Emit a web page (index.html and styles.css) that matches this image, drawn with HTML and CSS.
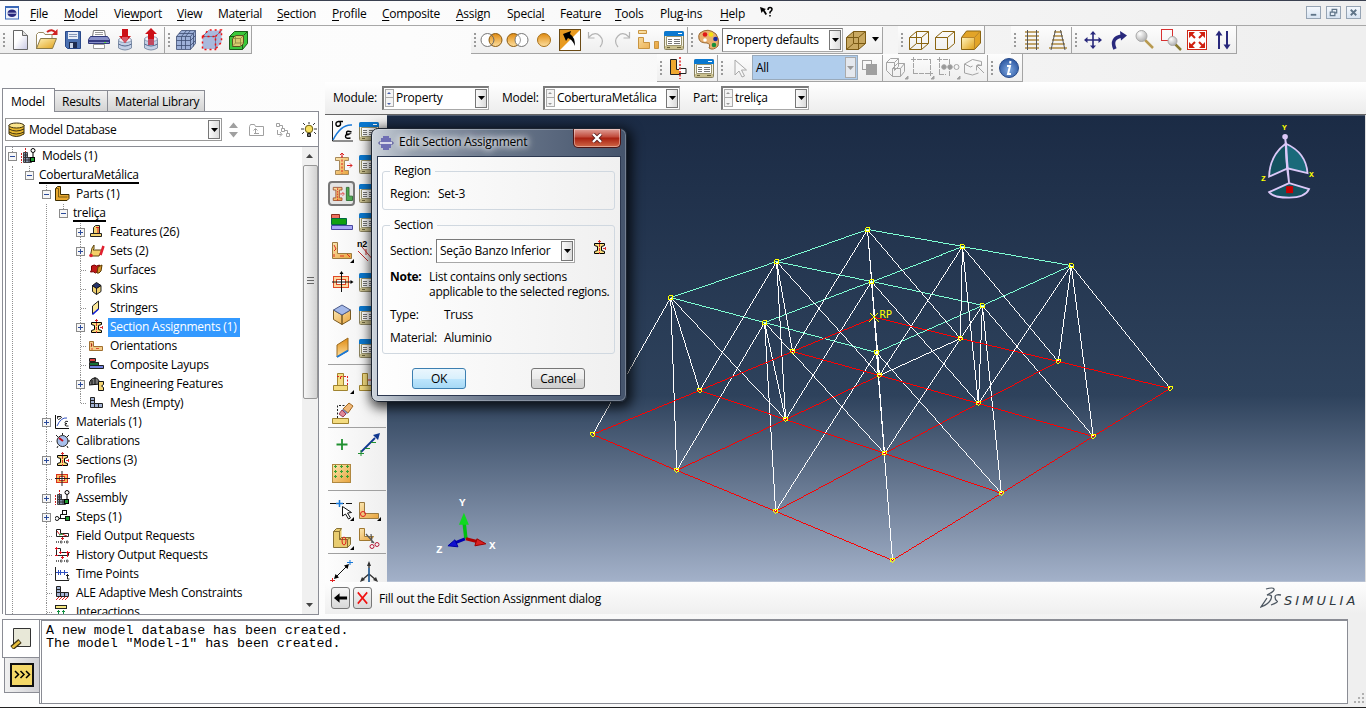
FILE: index.html
```html
<!DOCTYPE html>
<html lang="en">
<head>
<meta charset="utf-8">
<title>Edit Section Assignment</title>
<link rel="stylesheet" href="styles.css">
</head>
<body>
<svg class="defs" width="0" height="0" aria-hidden="true">
  <defs>
    <linearGradient id="gOr" x1="0" y1="0" x2="0" y2="1"><stop offset="0" stop-color="#e08a10"/><stop offset="1" stop-color="#fde0a0"/></linearGradient>
    <linearGradient id="gGold" x1="0" y1="0" x2="1" y2="1"><stop offset="0" stop-color="#fff2b8"/><stop offset="1" stop-color="#e0a21c"/></linearGradient>
    <linearGradient id="gPage" x1="0" y1="0" x2="1" y2="1"><stop offset="0.4" stop-color="#fff"/><stop offset="1" stop-color="#c8c8e4"/></linearGradient>
    <linearGradient id="gBar" x1="0" y1="0" x2="1" y2="1"><stop offset="0" stop-color="#fbe6b0"/><stop offset="1" stop-color="#e8a33c"/></linearGradient>
    <radialGradient id="gBall" cx="0.35" cy="0.3" r="0.8"><stop offset="0" stop-color="#fff"/><stop offset="1" stop-color="#a8a8a8"/></radialGradient>
    <radialGradient id="gInfo" cx="0.5" cy="0.6" r="0.6"><stop offset="0" stop-color="#7fa8e0"/><stop offset="1" stop-color="#2a55a0"/></radialGradient>
  </defs>
  <symbol id="table" viewBox="0 0 24 24"><rect x="2.500" y="3.500" width="19" height="18" rx="1" fill="#f4f2e4" stroke="#8a8360"/><path d="M2 8V5q0-2 2-2h16q2 0 2 2v3z" fill="#0a78d0"/><path d="M16 5.500h4" stroke="#fff"/><path d="M4.500 8.500h15v9h-15z" fill="#fff" stroke="#9a946e"/><path d="M6 11.500h4M6 13.500h4M6 15.500h4M12 11.500h6M12 13.500h6M12 15.500h6" stroke="#777"/><path d="M3 18h18v3H3z" fill="#c9bf8e"/><path d="M5 19.500h3M15 19.500h4" stroke="#6b633c"/></symbol>
  <symbol id="ibeam" viewBox="0 0 16 16"><path d="M2.500 3.500h10v2l-3 1v4l3 1v2h-10v-2l3-1v-4l-3-1z" fill="#fadc7c" stroke="#000"/><path d="M7.500 0v14M6 1.500h3M11 8.500h4M13.500 7v3" stroke="#d83030" stroke-dasharray="3 1"/></symbol>
  <symbol id="bigbeam" viewBox="0 0 24 24"><path d="M5.500 5.500h13v3h-4v10h4v4h-13v-4h4v-10h-4z" fill="url(#gBar)" stroke="#a8895a"/><path d="M12 4v18" stroke="#e02020" stroke-dasharray="2 1.500"/><path d="M12 5V1.500M10 3l2-2 2 2M17 13.500h5M20 11.500l2 2-2 2" fill="none" stroke="#d82020"/></symbol>
  <symbol id="assembly" viewBox="0 0 16 16"><path d="M2.500 4.500h4v5h4v5h-8z" fill="#8794b0" stroke="#444"/><path d="M4.500 5v9M3 7h4M3 9.500h7M3 12h7M8 10v4" stroke="#333"/><path d="M4.500 0v4M.500 5v10" stroke="#d02020" stroke-dasharray="2 1"/><circle cx="12" cy="2.500" r="2" fill="#fff" stroke="#000"/><path d="M12 5v4" stroke="#000"/><rect x="9.500" y="9.500" width="4" height="4" fill="#1c9c30" stroke="#000"/></symbol>
  <symbol id="wirecube" viewBox="0 0 24 24"><path d="M2.500 9.500h12v12h-12zM9.500 3.500h12v12h-12zM2.500 9.500l7-6M14.500 9.500l7-6M2.500 21.500l7-6M14.500 21.500l7-6"/></symbol>
  <symbol id="dn" viewBox="0 0 9 5"><path d="M0 0h9L4.500 5z"/></symbol>
  <symbol id="lplate" viewBox="0 0 24 24"><path d="M2.500 3.500h5v11h14v5h-19z" fill="url(#gBar)" stroke="#9a7a40"/></symbol>
  <symbol id="plus" viewBox="0 0 17 19"><path d="M8.500 0v5M8.500 14v5" stroke="#909090" stroke-dasharray="1 1"/><rect x="4.500" y="5.500" width="8" height="8" fill="#f6f6f6" stroke="#8a8a8a"/><path d="M6 9.500h5M8.500 7v5" stroke="#2a4a9a"/></symbol>
  <symbol id="minus" viewBox="0 0 17 19"><path d="M8.500 0v5" stroke="#909090" stroke-dasharray="1 1"/><rect x="4.500" y="5.500" width="8" height="8" fill="#f6f6f6" stroke="#8a8a8a"/><path d="M6 9.500h5" stroke="#2a4a9a"/></symbol>
  <symbol id="leaf" viewBox="0 0 17 19"><path d="M8.500 0v19M9 9.500h5" stroke="#909090" stroke-dasharray="1 1"/></symbol>
  <symbol id="last" viewBox="0 0 17 19"><path d="M8.500 0v10M9 9.500h5" stroke="#909090" stroke-dasharray="1 1"/></symbol>
</svg>

<header class="menubar">
  <svg class="appicon" viewBox="0 0 14 14"><rect x=".5" y=".5" width="13" height="12.500" fill="#eef3fb" stroke="#3a68b8"/><path d="M1 1.500h12" stroke="#3a68b8"/><ellipse cx="7" cy="7.200" rx="4.500" ry="3.800" fill="#28287c"/><path d="M2 7.200h10" stroke="#c8cce8"/></svg>
  <nav class="menus">
    <span><u>F</u>ile</span><span><u>M</u>odel</span><span>Vie<u>w</u>port</span><span><u>V</u>iew</span><span>Mat<u>e</u>rial</span><span><u>S</u>ection</span><span><u>P</u>rofile</span><span><u>C</u>omposite</span><span><u>A</u>ssign</span><span>Specia<u>l</u></span><span>Feat<u>u</u>re</span><span><u>T</u>ools</span><span>Plu<u>g</u>-ins</span><span><u>H</u>elp</span>
    <svg class="whatis" viewBox="0 0 14 13"><path d="M0 1l6 2-1.500 1 2.500 4-1.500 1L3 5 1.500 7z" fill="#000"/><path d="M8 4q0-2.500 2-2.500t2 2q0 1-2 2.500v1.500M10 9v1.500" stroke="#000" stroke-width="1.500" fill="none"/></svg>
  </nav>
  <div class="winbtns">
    <b><svg viewBox="0 0 14 12"><path d="M4 8.500h6" stroke="#5f7488" stroke-width="2"/></svg></b>
    <b><svg viewBox="0 0 14 12"><path d="M5.500 5V2.500h5v4H9M3.500 5.500h5v4h-5z" fill="none" stroke="#5f7488" stroke-width="1.300"/></svg></b>
    <b><svg viewBox="0 0 14 12"><path d="M4 3l6 6M10 3l-6 6" stroke="#5f7488" stroke-width="2"/></svg></b>
  </div>
</header>

<div class="toolrow">
  <div class="group">
    <i class="grip"></i>
    <svg class="ic" viewBox="0 0 24 24"><path d="M4.500 2.500h9l5 5v14h-14z" fill="url(#gPage)" stroke="#666"/><path d="M13.500 2.500v5h5" fill="#ddd" stroke="#666"/></svg>
    <svg class="ic" viewBox="0 0 24 24"><path d="M1.500 21V6.500l2-2h5l1.500 2h7V12" fill="#fff" stroke="#9a8a60"/><path d="M1.500 20.500l4-10h16l-4 10z" fill="url(#gGold)" stroke="#8a7a48"/><path d="M12 4q5-4 9 1" stroke="#d02020" stroke-width="2" fill="none"/><path d="M22.500 1v6h-6z" fill="#d02020"/></svg>
    <svg class="ic" viewBox="0 0 24 24"><path d="M4.500 3.500h15v17h-13l-2-2z" fill="#4a70b0" stroke="#28488a"/><path d="M7 4h10v7H7z" fill="#e8eef8"/><path d="M8 6.500h8M8 8.500h8" stroke="#8898b8"/><path d="M8 14h8v6H8z" fill="#1d2c50"/><path d="M9 15h3v5H9z" fill="#c8d4e8"/></svg>
    <svg class="ic" viewBox="0 0 24 24"><path d="M6.500 2.500h11l1 6h-13z" fill="#fff" stroke="#777"/><path d="M8 4.500h8M8 6.500h8" stroke="#999"/><path d="M3.500 8.500h17l2 3v4h-21v-4z" fill="#8890c8" stroke="#30387a"/><path d="M2 12h20v2H2z" fill="#343a80"/><path d="M6.500 16.500h11v4h-11z" fill="#fff" stroke="#999"/><path d="M17 14.500h2" stroke="#60e040"/></svg>
    <svg class="ic" viewBox="0 0 24 24"><path d="M5.500 12v8q6.500 4 13 0v-8z" fill="#c4d0e6" stroke="#8090a8"/><ellipse cx="12" cy="12" rx="6.500" ry="2.500" fill="#eef2fa" stroke="#8d9bb5"/><path d="M5.500 16q6.500 4 13 0" fill="none" stroke="#54698e"/><path d="M9 1h6v7h3l-6 7-6-7h3z" fill="#cc1018"/><path d="M9 9h6v2l-3 4-3-4z" fill="#d85868"/></svg>
    <svg class="ic" viewBox="0 0 24 24"><path d="M5.500 11v9q6.500 4 13 0v-9z" fill="#c4d0e6" stroke="#8090a8"/><ellipse cx="12" cy="11" rx="6.500" ry="2.500" fill="#eef2fa" stroke="#8d9bb5"/><path d="M5.500 16q6.500 4 13 0" fill="none" stroke="#54698e"/><path d="M9 17V6H6l6-6 6 6h-3v11z" fill="#cc1018"/><path d="M9 11h6v6H9z" fill="#c04860"/></svg>
    <i class="sep"></i><i class="grip"></i>
    <svg class="ic" viewBox="0 0 24 24"><path d="M2.500 8.500l5-6h14v13l-5 6h-14z" fill="#9db0d8"/><path d="M2.500 8.500l5-6h14v13l-5 6h-14zM2.500 8.500h14v13M16.500 8.500l5-6M7.500 9v12M11.500 9v12M2.500 12.500h14M2.500 17.500h14M7.500 8.500l5-6M11.500 8.500l5-6M5 5.500h14.500v13M16.500 12.500l5-5M16.500 17.500l5-5" fill="none" stroke="#3c4c72" stroke-width=".8"/></svg>
    <svg class="ic" viewBox="0 0 24 24"><path d="M2.500 8.500l6-6h13v12l-6 6.500h-13z" fill="#a9b9dc"/><path d="M2.500 8.500h13v13M15.500 8.500l6-6M2.500 8.500l6-6" fill="none" stroke="#6b7ca4"/><path d="M2.500 8.500h13v13h-13zM2.500 8.500l6-6.500h13v12l-6 7M15.500 8.500l6-6" fill="none" stroke="#f01010" stroke-width="1.500" stroke-dasharray="2 3"/></svg>
    <svg class="ic" viewBox="0 0 24 24"><path d="M3.500 8.500l5-5h13v12l-5 6h-13z" fill="#3bc83b" stroke="#1a5c1a"/><path d="M16.500 8.500l5-5M3.500 8.500h13v13" fill="none" stroke="#1a5c1a"/><path d="M6.500 10.500l3-3h8v8l-3 3h-8z" fill="#d8cc70" stroke="#5c5420"/><path d="M6.500 10.500h8v8M14.500 10.500l3-3M9.500 8v7h8M9.500 15l-3 3" fill="none" stroke="#8c8440" stroke-width=".8"/></svg>
  </div>
  <div class="group g2">
    <i class="grip"></i>
    <svg class="ic" viewBox="0 0 24 24"><circle cx="7.500" cy="12" r="6.500" fill="#fff" stroke="#777"/><circle cx="15.500" cy="12" r="6.500" fill="url(#gOr)" stroke="#8a5a10"/><path d="M11.500 7q5 5 0 10" fill="none" stroke="#666"/></svg>
    <svg class="ic" viewBox="0 0 24 24"><circle cx="7.500" cy="12" r="6.500" fill="url(#gOr)" stroke="#8a5a10"/><circle cx="15.500" cy="12" r="6.500" fill="#fff" stroke="#777"/><path d="M12 7q5 5 0 10" fill="none" stroke="#999"/></svg>
    <svg class="ic" viewBox="0 0 24 24"><circle cx="12" cy="12" r="6.500" fill="url(#gOr)" stroke="#a87018"/></svg>
    <svg class="ic" viewBox="0 0 24 24"><rect x="1.500" y="1.500" width="21" height="21" fill="#fff" stroke="#6b4a14"/><path d="M2 2h20L2 22z" fill="#e89a20"/><path d="M5 6l8-3-1 3q5 3 5 12-3-7-7-8l-2 3z" fill="#000"/></svg>
    <svg class="ic" viewBox="0 0 24 24"><path d="M5 9q6-6 11-1t0 11M4.500 4v6h6" fill="none" stroke="#b4b4b4" stroke-width="1.200"/></svg>
    <svg class="ic" viewBox="0 0 24 24"><path d="M19 9q-6-6-11-1t0 11M19.500 4v6h-6" fill="none" stroke="#b4b4b4" stroke-width="1.200"/></svg>
    <svg class="ic" viewBox="0 0 24 24"><path d="M2.500 2.500h8v3h-8zM2.500 9.500h5v5h6v6h-11zM18.500 13.500h4v7h-4z" fill="url(#gBar)" stroke="#c89440"/></svg>
    <svg class="ic"><use href="#table"/></svg>
    <i class="sep"></i><i class="grip"></i>
    <svg class="ic" viewBox="0 0 24 24"><path d="M3 5q8-6 16 1 4 5 2 12-5 5-9 2 2-4-2-5-7 0-8-4t1-6z" fill="#e8b070" stroke="#9a6830"/><circle cx="8" cy="6.500" r="2.300" fill="#e01818"/><circle cx="14" cy="6.500" r="2.300" fill="#f4e010"/><circle cx="18.500" cy="11" r="2.300" fill="#1828a0"/><circle cx="17" cy="17" r="2.300" fill="#18903a"/><circle cx="8" cy="12" r="1.800" fill="#fff"/></svg>
    <div class="combo w121"><span>Property defaults</span><b><svg><use href="#dn"/></svg></b></div>
    <svg class="ic" viewBox="0 0 24 24"><path d="M2.500 9.500l7-6h12v12l-7 6h-12z" fill="#c8a860"/><use href="#wirecube" fill="none" stroke="#7a5a14"/></svg>
    <svg class="caret" viewBox="0 0 9 5"><path d="M1 0h7L4.500 4.500z"/></svg>
    <i class="sep"></i>
  </div>
  <div class="group g3">
    <i class="grip"></i>
    <svg class="ic"><use href="#wirecube" fill="none" stroke="#8a6410"/></svg>
    <svg class="ic" viewBox="0 0 24 24"><path d="M2.500 9.500h12v12h-12zM2.500 9.500l7-6h12v12l-7 6M14.500 9.500l7-6" fill="none" stroke="#8a6410"/></svg>
    <svg class="ic" viewBox="0 0 24 24"><path d="M2.500 9.500l5-6.500h14v12l-6 6.500h-13z" fill="#e2a428" stroke="#8a6410"/><path d="M3 10h12v11H3z" fill="url(#gGold)"/><path d="M15.500 9.500l5.500-6M3 9.500h12.500v12" stroke="#b8862c" fill="none"/></svg>
  </div>
  <div class="group g4">
    <i class="grip"></i>
    <svg class="ic" viewBox="0 0 24 24"><path d="M5 4h14M5 8h14M5 12h14M5 16h14M5 20h14" stroke="#b08a40" stroke-width="1.600"/><path d="M7.500 2v20M16.500 2v20" stroke="#555"/></svg>
    <svg class="ic" viewBox="0 0 24 24"><path d="M8 4h8M7 8h10M6 12h12M5 16h14M3 20h18" stroke="#b08a40" stroke-width="1.600"/><path d="M9.500 2L5 22M14.500 2L19 22" stroke="#555"/></svg>
    <i class="sep"></i><i class="grip"></i>
    <svg class="ic" viewBox="0 0 24 24"><path d="M12 4v16M4 12h16" stroke="#28287c" stroke-width="1.600"/><path d="M12 3l3 3.500H9zM12 21l3-3.500H9zM3 12l3.500-3v6zM21 12l-3.500-3v6z" fill="#28287c"/></svg>
    <svg class="ic" viewBox="0 0 24 24"><path d="M8 21q-5-11 7-13" fill="none" stroke="#28287c" stroke-width="3.500"/><path d="M13 3l7 4.500-6 5z" fill="#28287c"/></svg>
    <svg class="ic" viewBox="0 0 24 24"><path d="M11 11l9 9" stroke="#b89a50" stroke-width="2.500"/><circle cx="8.500" cy="8" r="5.500" fill="url(#gBall)" stroke="#aaa"/></svg>
    <svg class="ic" viewBox="0 0 24 24"><rect x="2.500" y="1.500" width="11" height="11" fill="none" stroke="#d83030"/><path d="M15 15l7 7" stroke="#8a7a30" stroke-width="2.500"/><circle cx="13.500" cy="13" r="4.500" fill="url(#gBall)" stroke="#aaa"/></svg>
    <svg class="ic" viewBox="0 0 24 24"><rect x="2.500" y="2.500" width="19" height="19" fill="#fff" stroke="#d02818"/><path d="M4 4h6L4 10zM20 4v6l-6-6zM4 20v-6l6 6zM20 20h-6l6-6z" fill="#d02010"/><path d="M6 6l4 4M18 6l-4 4M6 18l4-4M18 18l-4-4" stroke="#d02010" stroke-width="2"/></svg>
    <svg class="ic" viewBox="0 0 24 24"><path d="M8 5v16M16 3v15" stroke="#28287c" stroke-width="2"/><path d="M8 2.500l3.500 5h-7zM16 21.500l3.500-5h-7z" fill="#28287c"/></svg>
  </div>
</div>
<div class="toolrow second">
  <div class="group g5">
    <i class="grip"></i>
    <svg class="ic" viewBox="0 0 24 24"><path d="M4.500 3.500h6v10h4v5h-10z" fill="#efa830" stroke="#222"/><path d="M13 12.500h7v5h-7" fill="#fff" stroke="#222"/><path d="M14 1v22" stroke="#e02020" stroke-width="1.500" stroke-dasharray="2 1.500"/></svg>
    <svg class="ic"><use href="#table"/></svg>
    <i class="sep"></i><i class="grip"></i>
    <svg class="ic cur" viewBox="0 0 24 24"><path d="M7.500 4v15l4-4 3 6 2.500-1-3-6h5z" fill="#f8f8f8" stroke="#a8a8a8"/></svg>
    <div class="combo all"><span>All</span><b><svg><use href="#dn"/></svg></b></div>
    <svg class="ic w24" viewBox="0 0 24 24"><rect x="4.500" y="4.500" width="9" height="9" fill="none" stroke="#a0a0a0"/><rect x="8" y="8" width="11" height="11" fill="#a0a0a0"/></svg>
    <i class="sep"></i>
    <svg class="ic" viewBox="0 0 24 24" fill="none" stroke="#a4a4a4"><path d="M2.500 6.500l4-4h8v8l-4 4M2.500 6.500h8v8M10.500 6.500l4-4M8.500 12.500l5-5h7v8l-4 5h-8zM8.500 12.500h8v8M16.500 12.500l4-5M2.500 6.500v8l6 6"/><path d="M24 23v-3l-3 3z" fill="#999"/></svg>
    <svg class="ic" viewBox="0 0 24 24" fill="none" stroke="#a4a4a4"><path d="M3.500 1v17M1 3.500h20M20.500 3v17M3 17.500h20" stroke-dasharray="5 1"/><path d="M24 23v-3l-3 3z" fill="#999"/></svg>
    <svg class="ic" viewBox="0 0 24 24" fill="none" stroke="#a4a4a4"><path d="M3.500 1v18M1 3.500h11M3 18.500h7M13.500 3v18" stroke-dasharray="5 1"/><circle cx="8" cy="11" r="2.300" fill="#999"/><circle cx="14" cy="11" r="2.300" fill="#999"/><circle cx="20.500" cy="11" r="2.500"/><path d="M24 23v-3l-3 3z" fill="#999"/></svg>
    <svg class="ic" viewBox="0 0 24 24" fill="none" stroke="#a4a4a4"><path d="M2.500 8l8-4.500 9 2v4l-4-1M2.500 8v9l8 2 6-2M2.500 8l6 3 2-1"/><path d="M15 10l7 7M14.500 14.500v-5h5"/></svg>
    <i class="sep"></i><i class="grip"></i>
    <svg class="ic" viewBox="0 0 24 24"><circle cx="12" cy="12" r="9.500" fill="url(#gInfo)" stroke="#274a8a"/><path d="M13.500 5l-.4 2.500M10 10h3l-2 8h3" fill="none" stroke="#fff" stroke-width="2"/></svg>
  </div>
</div>

<main class="work">
  <aside class="side">
    <div class="tabs"><span class="on">Model</span><span>Results</span><span>Material Library</span></div>
    <div class="panel">
      <div class="dbrow">
        <div class="combo db"><svg class="dbi" viewBox="0 0 17 16"><path d="M1 3v9q7 5 15 0V3z" fill="#e8b830" stroke="#3c3010"/><ellipse cx="8.500" cy="3.500" rx="7.500" ry="2.500" fill="#fae48c" stroke="#3c3010"/><path d="M1 7q7 4 15 0M1 10q7 4 15 0" fill="none" stroke="#3c3010"/></svg><span>Model Database</span><b><svg><use href="#dn"/></svg></b></div>
        <svg class="d1" viewBox="0 0 12 18"><path d="M1 7h9L5.500 1.500zM1 11h9l-4.500 5.500z" fill="#a0a0a0"/></svg>
        <svg class="d2" viewBox="0 0 16 14" fill="none" stroke="#a0a0a0"><path d="M.5 12.500v-9l1-2h4l1 2h8v9zM5 10.500h5M6.500 10V6M4.500 7.500l2-2 2 2"/></svg>
        <svg class="d3" viewBox="0 0 16 16" fill="none" stroke="#a0a0a0"><path d="M1.500 1.500h3v3h-3zM6.500 6.500h3v3h-3zM11.500 11.500h3v3h-3zM5 3.500h2.500V6M10 8.500h2.500V11M2.500 8v4.500h4M5 10l2 2.500-2 2"/></svg>
        <svg class="d4" viewBox="0 0 16 16"><circle cx="8" cy="7" r="3.800" fill="#f8e060" stroke="#6a5a10"/><path d="M6.500 11.500h3v3h-3z" fill="#777" stroke="#222"/><path d="M8 0v2M2 1l2 2M14 1l-2 2M0 7h3M13 7h3M1 12l2-2M15 12l-2-2" stroke="#333"/></svg>
      </div>
      <div class="treebox">
        <ul class="tree root">
          <li class="more"><p><svg class="bx"><use href="#minus"/></svg><svg class="ti"><use href="#assembly"/></svg>Models (1)</p>
            <ul>
              <li><p><svg class="bx"><use href="#minus"/></svg><span class="noicon">CoberturaMetálica</span></p>
                <ul>
                  <li class="more"><p><svg class="bx"><use href="#minus"/></svg><svg class="ti" viewBox="0 0 16 16"><path d="M.5 2.500l2-2h3v8h8.500v4l-2 2H.5z" fill="#e8a830" stroke="#3c2c00"/><path d="M1 2.500h2.500v8.500h9" fill="none" stroke="#7c5c10"/></svg>Parts (1)</p>
                    <ul>
                      <li><p><svg class="bx"><use href="#minus"/></svg><span class="noicon">treliça</span></p>
                        <ul>
                          <li><p><svg class="bx"><use href="#plus"/></svg><svg class="ti" viewBox="0 0 16 16"><path d="M4.500 9V3.500l2-2h4V9M1.500 9.500h11v3h-11z" fill="#f4d470" stroke="#222"/><path d="M7 3.500h3M9 4v5" stroke="#d82020"/></svg>Features (26)</p></li>
                          <li><p><svg class="bx"><use href="#plus"/></svg><svg class="ti" viewBox="0 0 16 16"><path d="M1.500 12l1.500-7 2-3v4l-1 1h9l-3 6H2z" fill="#f4d068" stroke="#5c4410"/><path d="M14.500 3l-3 9" stroke="#e02030" stroke-width="2.500"/><circle cx="2" cy="12.500" r="1.800" fill="#e02030"/></svg>Sets (2)</p></li>
                          <li><p><svg class="bx"><use href="#leaf"/></svg><svg class="ti" viewBox="0 0 16 16"><path d="M2.500 4q3-2 5 0l3-1-1 6-3 2q-2-2-5-1l1-2z" fill="#c01818" stroke="#700"/><path d="M9 5l4-2-1 6q-2 3-4 2z" fill="#d8962c" stroke="#5c3c00"/></svg>Surfaces</p></li>
                          <li><p><svg class="bx"><use href="#leaf"/></svg><svg class="ti" viewBox="0 0 16 16"><path d="M3.500 4.500l4 2.500v6.500l-4-3zM12 4.500l-4.500 2.500v6.500l4.500-3z" fill="#f0d070" stroke="#222"/><path d="M3.500 4.500l4-3 4.500 3-4.500 3z" fill="#26346c" stroke="#111"/></svg>Skins</p></li>
                          <li><p><svg class="bx"><use href="#leaf"/></svg><svg class="ti" viewBox="0 0 16 16"><path d="M3.500 6l6-5v8l-6 5z" fill="#fbe89a" stroke="#222"/><path d="M3.500 14.500l6-5.500" stroke="#1020e0" stroke-width="1.500"/></svg>Stringers</p></li>
                          <li><p><svg class="bx"><use href="#plus"/></svg><svg class="ti"><use href="#ibeam"/></svg><span class="sel">Section Assignments (1)</span></p></li>
                          <li><p><svg class="bx"><use href="#leaf"/></svg><svg class="ti" viewBox="0 0 16 16"><path d="M.5 3.500h4v5h9v4H.5z" fill="#f4cc88" stroke="#a07030"/><path d="M2 5l1 2-1 2M7 10.500h3M3 10v2" stroke="#d83020" stroke-width=".8"/></svg>Orientations</p></li>
                          <li><p><svg class="bx"><use href="#leaf"/></svg><svg class="ti" viewBox="0 0 16 16"><path d="M.5 1.500h6v3h-6z" fill="#e04040" stroke="#222"/><path d="M.5 5.500h9v3h-9z" fill="#187038" stroke="#222"/><path d="M.5 8.500h14v3h-14z" fill="#7080e0" stroke="#222"/></svg>Composite Layups</p></li>
                          <li><p><svg class="bx"><use href="#plus"/></svg><svg class="ti" viewBox="0 0 16 16"><path d="M0 9q1-7 6-7 4 0 5 6z" fill="#777" stroke="#111"/><path d="M3 4v5M6 1v8" stroke="#111"/><path d="M9.500 5.500h5v3l-2 1.500 2 1.500v3h-5z" fill="#f4d470" stroke="#111"/></svg>Engineering Features</p></li>
                          <li><p><svg class="bx"><use href="#last"/></svg><svg class="ti" viewBox="0 0 16 16"><path d="M1.500 2.500h4v6h8v4h-12zM1.500 5.500h4M1.500 8.500h4v4M9.500 8.500v4" fill="#a4b4d4" stroke="#222"/></svg>Mesh (Empty)</p></li>
                        </ul>
                      </li>
                    </ul>
                  </li>
                  <li><p><svg class="bx"><use href="#plus"/></svg><svg class="ti" viewBox="0 0 16 16" fill="none"><path d="M.5 1v13.500H14" stroke="#111"/><path d="M2 12q4-9 10-8" stroke="#3050c0"/><path d="M2 2.500h4M4 2.500q-2 0-1.500 2t3 0-1.500-2M13 7.500q-3-1-3 1t2 1q-2 0-2 1.500t3.500 1" stroke="#111" stroke-width=".9"/></svg>Materials (1)</p></li>
                  <li><p><svg class="bx"><use href="#leaf"/></svg><svg class="ti" viewBox="0 0 16 16"><circle cx="7.500" cy="8" r="5.500" fill="#a8c0ec" stroke="#222"/><path d="M7.500 0v2M1 2l2 2M14 2l-2 2M13 8h2M3 13l-1 2M12 13l1 2" stroke="#222"/><path d="M4 5l4 3" stroke="#c01020" stroke-width="2"/></svg>Calibrations</p></li>
                  <li><p><svg class="bx"><use href="#plus"/></svg><svg class="ti"><use href="#ibeam"/></svg>Sections (3)</p></li>
                  <li><p><svg class="bx"><use href="#leaf"/></svg><svg class="ti" viewBox="0 0 16 16"><rect x="1.500" y="3.500" width="11" height="8" fill="#f8c060" stroke="#d83020"/><rect x="4.500" y="5.500" width="5" height="4" fill="#fff" stroke="#d83020"/><path d="M7 0v15M0 7.500h15" stroke="#222"/></svg>Profiles</p></li>
                  <li><p><svg class="bx"><use href="#plus"/></svg><svg class="ti"><use href="#assembly"/></svg>Assembly</p></li>
                  <li><p><svg class="bx"><use href="#plus"/></svg><svg class="ti" viewBox="0 0 16 16"><circle cx="2" cy="9.500" r="2" fill="#fff" stroke="#111"/><path d="M4 9.500h6M5.500 9V5.500h3" stroke="#111" fill="none"/><rect x="7.500" y="1.500" width="4" height="4" fill="#fff" stroke="#111"/><rect x="10.500" y="7.500" width="4" height="4" fill="#20a030" stroke="#111"/></svg>Steps (1)</p></li>
                  <li><p><svg class="bx"><use href="#leaf"/></svg><svg class="ti" viewBox="0 0 16 16" fill="none"><path d="M1.500 8.500v-7h4v4h8v3z" stroke="#222"/><path d="M2 3l3 4M7 6l5 2M7.500 9v3M6 10.500h3" stroke="#d02020"/><path d="M4 7l4-1" stroke="#20a030"/><path d="M1.500 13v2M3.500 13v2M9.500 13v2M5.500 13h1.500v2H5.500zM11.500 13H13v2h-1.500z" stroke="#444" stroke-width=".8"/></svg>Field Output Requests</p></li>
                  <li><p><svg class="bx"><use href="#leaf"/></svg><svg class="ti" viewBox="0 0 16 16" fill="none"><path d="M1.500 8.500v-7h4v4h8v3z" stroke="#222"/><path d="M0 1.500h3M1.500 0v3M4 5.500h3M5.500 4v3M12.500 4v6M0 8.500h3M7.500 9v3M6 10.500h3M11 5.500h4" stroke="#e01020"/><path d="M1.500 13v2M3.500 13v2M9.500 13v2M5.500 13h1.500v2H5.500zM11.500 13H13v2h-1.500z" stroke="#444" stroke-width=".8"/></svg>History Output Requests</p></li>
                  <li><p><svg class="bx"><use href="#leaf"/></svg><svg class="ti" viewBox="0 0 16 16" fill="none"><path d="M.5 1v13.500H14M12.500 8v5h2M11 9.500h3" stroke="#222"/><path d="M1 6.500h12M3.500 4v5M5.500 4v5M9.500 4v5" stroke="#3050c0"/></svg>Time Points</p></li>
                  <li><p><svg class="bx"><use href="#leaf"/></svg><svg class="ti" viewBox="0 0 16 16"><path d="M1.500 1.500h4v6h8v4h-12zM1.500 4.500h4M1.500 7.500h4v4M9.500 7.500v4" fill="#a4b4d4" stroke="#222"/><path d="M1 15l3-3M4 15l3-3M7 15l3-3M10 15l3-3" stroke="#e02020"/></svg>ALE Adaptive Mesh Constraints</p></li>
                  <li><p><svg class="bx"><use href="#leaf"/></svg><svg class="ti" viewBox="0 0 16 16"><rect x=".5" y="1.500" width="11" height="3" fill="#f8e880" stroke="#222"/><path d="M3.500 6v10M8.500 6v10M2 7.500h3M7 7.500h3" stroke="#109040"/></svg>Interactions</p></li>
                </ul>
              </li>
            </ul>
          </li>
        </ul>
        <div class="scroll"><svg viewBox="0 0 8 5"><path d="M0 4h7L3.500 0z"/></svg><i></i><svg class="bot" viewBox="0 0 8 5"><path d="M0 0h7L3.500 4z"/></svg></div>
      </div>
    </div>
  </aside>

  <section class="stage">
    <div class="context">
      <label class="l1">Module:</label><div class="combo c1"><em class="spin act"></em><span>Property</span><b><svg><use href="#dn"/></svg></b></div>
      <label class="l2">Model:</label><div class="combo c2"><em class="spin"></em><span>CoberturaMetálica</span><b><svg><use href="#dn"/></svg></b></div>
      <label class="l3">Part:</label><div class="combo c3"><em class="spin"></em><span>treliça</span><b><svg><use href="#dn"/></svg></b></div>
    </div>
    <div class="canvasrow">
      <div class="toolbox">
        <svg class="tb" viewBox="0 0 24 24" fill="none"><path d="M2.500 2v20H23" stroke="#222"/><path d="M3 21Q11 5 22 6" stroke="#1878d8" stroke-width="1.500"/><path d="M13 2.500H8.500q-3 .500-2.500 3t3 1.500 1-4M21.500 13q-5-2-5 1t3 1q-4 0-4 2.500t5 1.500" stroke="#000" stroke-width="1.400"/></svg><svg class="tb"><use href="#table"/></svg>
        <svg class="tb"><use href="#bigbeam"/></svg><svg class="tb"><use href="#table"/></svg>
        <span class="tb pressed"><svg viewBox="0 0 26 24"><path d="M3 5h10v3h-3v9h3v3H3v-3h3V8H3z" fill="url(#gBar)" stroke="#9a5030"/><path d="M8 6v14M11 12.500h5M14 10.500v4" stroke="#e02020" stroke-dasharray="2 1"/><path d="M18 5h3v10h4v5h-7z" fill="#4ca850" stroke="#2a6a30"/></svg></span><svg class="tb"><use href="#table"/></svg>
        <svg class="tb" viewBox="0 0 24 24"><path d="M1.500 4.500h8v4h-8z" fill="#f07060" stroke="#8a3020"/><path d="M1.500 8.500h15v6h-15z" fill="#10a010" stroke="#064"/><path d="M1.500 15.500h21v4h-21z" fill="#a8a8f8" stroke="#4848a0"/></svg><svg class="tb"><use href="#table"/></svg>
        <svg class="tb" viewBox="0 0 24 24"><use href="#lplate"/><path d="M4 6l2 4-2 2M4 18v-3M10 17h4M17 15l3 3" stroke="#e03020" fill="none"/><path d="M24 24v-4l-4 4z"/></svg><svg class="tb" viewBox="0 0 24 24"><path d="M1 12l10 10M5 8l12 14M9 10v6" stroke="#c03030"/><text x="0" y="8" class="n2">n2</text></svg>
        <svg class="tb" viewBox="0 0 24 24"><rect x="3.500" y="6.500" width="15" height="11" fill="#fcd8a0" stroke="#e04828"/><rect x="6.500" y="9.500" width="9" height="5" fill="#fff" stroke="#e04828"/><path d="M11.500 3v19M2 12h20" stroke="#111"/><path d="M11.500 1l2 3h-4zM23.500 12l-3-2v4z"/></svg><svg class="tb"><use href="#table"/></svg>
        <svg class="tb" viewBox="0 0 24 24"><path d="M3.500 7l8.500 5v9.500l-8.500-5zM20.500 7L12 12v9.500l8.500-5z" fill="url(#gBar)" stroke="#7a5a20"/><path d="M3.500 7L12 2l8.500 5-8.500 5z" fill="#a4b8e8" stroke="#4a5a8a"/></svg><svg class="tb"><use href="#table"/></svg>
        <svg class="tb" viewBox="0 0 24 24"><path d="M7 9l11-7v13L7 21z" fill="url(#gOr)" stroke="#9a6a20"/><path d="M7 21l11-6.500" stroke="#1878d8" stroke-width="2"/></svg><svg class="tb"><use href="#table"/></svg>
        <hr>
        <svg class="tb" viewBox="0 0 24 24"><path d="M7.500 15.500v-12h6v12M3.500 15.500h14v5h-14z" fill="#f4dc80" stroke="#a08430"/><path d="M7 6.500h11M17.500 6v9M10.500 7v3" stroke="#e02020" stroke-dasharray="2 1.500"/><path d="M24 24v-4l-4 4z"/></svg><svg class="tb" viewBox="0 0 24 24"><path d="M5.500 15.500v-12h5v12M2.500 15.500h12v5h-12z" fill="#f4dc80" stroke="#a08430"/><path d="M11 10h5" stroke="#e02020"/></svg>
        <svg class="tb" viewBox="0 0 24 24"><path d="M2.500 17.500h16v5h-16z" fill="#f4dc80" stroke="#a08430"/><path d="M7.500 17V4.500h7" fill="none" stroke="#222" stroke-dasharray="2 1.500"/><path d="M13 8l6-6 4 3-5 7z" fill="#f0b878" stroke="#a06820"/><path d="M13 8l5 4-1 1-5-4z" fill="#7080b8"/><path d="M12 9l4 4-3 3-4-3z" fill="#e08898" stroke="#9a4058"/></svg><i></i>
        <hr>
        <svg class="tb dnp" viewBox="0 0 24 24"><path d="M12 6v11M6.500 11.500h11" stroke="#209030" stroke-width="1.800"/></svg><svg class="tb dnp" viewBox="0 0 24 24"><path d="M4 19L18 5" stroke="#103890" stroke-width="1.800"/><path d="M23 0l-2 7-5-5z" fill="#103890"/><path d="M1 20.500h6M4 17v6M8 15.500h5M14 9.500h5" stroke="#209030"/></svg>
        <svg class="tb up" viewBox="0 0 24 24"><rect x="2.500" y="3.500" width="18" height="18" fill="url(#gBar)" stroke="#b08840"/><path d="M4 5.500h15M4 10.500h15M4 15.500h15" stroke="#3aa030" stroke-dasharray="3 3"/><path d="M5.500 3v14M11.500 3v14M17.500 3v14" stroke="#3aa030" stroke-dasharray="0 1 3 1"/></svg><i></i>
        <hr>
        <svg class="tb low" viewBox="0 0 24 24"><path d="M0 4.500h24" stroke="#111" stroke-dasharray="6 2"/><path d="M9.500 1v7M6 4.500h7" stroke="#1878d8" stroke-width="1.500"/><path d="M12.500 7.500l9 6-4 .5 3 5-2 1-3-5-3 2z" fill="#fff" stroke="#111"/><path d="M24 22v-4l-4 4z"/></svg><svg class="tb low" viewBox="0 0 24 24"><use href="#lplate"/><circle cx="6" cy="15" r="2.500" fill="none" stroke="#e02020"/><path d="M24 22v-4l-4 4z"/></svg>
        <svg class="tb" viewBox="0 0 24 24"><path d="M3.500 5.500l3-3h5v9h9v7l-3 3h-14z" fill="#e8cc70"/><path d="M3.500 5.500l3-3h5l-2 3v8l2-2h9v7l-3 3h-14zM3.500 5.500h6M9.500 13.500h8v8M17.500 13.500l3-2" fill="none" stroke="#7a6428" stroke-width=".9"/><ellipse cx="14" cy="15" rx="2" ry="4" fill="none" stroke="#e02020"/><path d="M24 24v-4l-4 4z"/></svg><svg class="tb" viewBox="0 0 24 24"><path d="M2.500 2.500h5v8h9l-3 4h-11z" fill="url(#gBar)" stroke="#a07830"/><path d="M9 8l8 9M14 8l1 9" stroke="#555" stroke-width="1.200"/><circle cx="15" cy="20.500" r="2" fill="none" stroke="#b81838"/><circle cx="20" cy="18.500" r="2" fill="none" stroke="#b81838"/></svg>
        <hr>
        <svg class="tb" viewBox="0 0 24 24"><path d="M6 17L17 6" stroke="#111"/><path d="M4 19l1.500-5L9 17.500zM19 4l-5 1.500L17.500 9z"/><path d="M17 2.500h6M20 0v5" stroke="#1878d8"/><path d="M0 20.500h5M2.500 18v5" stroke="#e02020"/></svg><svg class="tb" viewBox="0 0 24 24"><path d="M12 3v20M12 14l-7 6M12 14l7 6" stroke="#333" stroke-width="1.400" fill="none"/><path d="M12 1l2 5h-4zM3 22l2-5 3 3zM21 22l-2-5-3 3z" fill="#333"/><path d="M12 8v15" stroke="#1878d8"/></svg>
      </div>
      <svg class="view" viewBox="387 115 979 467">
        <defs><linearGradient id="bg" x1="0" y1="0" x2="0" y2="1"><stop offset="0" stop-color="#1b2b45"/><stop offset=".6" stop-color="#2e425c"/><stop offset="1" stop-color="#a3b1c9"/></linearGradient></defs>
        <rect x="387" y="115" width="979" height="467" fill="url(#bg)"/>
        <g fill="none" shape-rendering="crispEdges" stroke-width="1" transform="translate(0 -.5)">
          <path stroke="#7fffd4" d="M671 298L777 262L868 230L963 247L1072 266L983 306L877 353L765 323L671 298M777 262L872 282L983 306M963 247L872 282L765 323"/>
          <g stroke="#fff">
            <path d="M671 298L593 435M671 298L700 391M671 298L677 471M671 298L786 420M777 262L700 391M777 262L793 352M777 262L786 420M777 262L880 376"/>
            <path d="M868 230L793 352M868 230L875 318M868 230L961 339M868 230L880 376M963 247L961 339M963 247L880 376M963 247L1059 362M963 247L979 404"/>
            <path d="M1072 266L1059 362M1072 266L979 404M1072 266L1171 389M1072 266L1094 437M872 282L880 376M872 282L786 420M872 282L979 404M872 282L885 454"/>
            <path d="M765 323L786 420M765 323L677 471M765 323L885 454M765 323L776 512M983 306L979 404M983 306L885 454M983 306L1094 437M983 306L1002 494"/>
            <path d="M877 353L885 454M877 353L776 512M877 353L1002 494M877 353L893 561M961 339L880 376"/>
          </g>
          <path stroke="#f00" d="M875 318L793 352L700 391L593 435L677 471L776 512L893 561L1002 494L1094 437L1171 389L1059 362L961 339L875 318M793 352L880 376L979 404L1094 437M700 391L786 420L885 454L1002 494M880 376L786 420L677 471M1059 362L979 404L885 454L776 512"/>
          <path stroke="#ff0" d="M669 296h4v4h-4zM775 260h4v4h-4zM866 228h4v4h-4zM961 245h4v4h-4zM1070 264h4v4h-4zM870 280h4v4h-4zM763 321h4v4h-4zM981 304h4v4h-4zM875 351h4v4h-4z"/>
          <path stroke="#ff0" d="M591 433h4v3l-2 1-2-1zM675 469h4v3l-2 1-2-1zM774 510h4v3l-2 1-2-1zM891 559h4v3l-2 1-2-1zM1000 492h4v3l-2 1-2-1zM1092 435h4v3l-2 1-2-1zM1169 387h4v3l-2 1-2-1zM1057 360h4v3l-2 1-2-1zM959 337h4v3l-2 1-2-1zM791 350h4v3l-2 1-2-1zM698 389h4v3l-2 1-2-1zM784 418h4v3l-2 1-2-1zM878 374h4v3l-2 1-2-1zM977 402h4v3l-2 1-2-1zM883 452h4v3l-2 1-2-1z"/>
          <path stroke="#ff0" d="M870 313l9 9M879 313l-9 9"/>
        </g>
        <text x="880" y="318" class="rp">RP</text>
        <g stroke="#dcc8f8" stroke-width="1.800">
          <path d="M1286.500 143.500q-16 12-16.500 33l18-8z" fill="#14525f"/><path d="M1287 143.500q20 9 21.500 29.500l-20.500-5z" fill="#1a6a7a"/>
          <path d="M1286 137l1 7 1 24 2 15-20 9q4 5.500 20 5.500t20-8.500l-20-6z" fill="#14525f"/>
        </g>
        <circle cx="1286" cy="136.500" r="2.800" fill="#dcc8f8"/><rect x="1287" y="186" width="7" height="7" fill="#c80000"/>
        <text class="tri" x="1283" y="130">Y</text><text class="tri" x="1310" y="177">X</text><text class="tri" x="1262" y="181">Z</text>
        <path d="M466 539l-2-18" stroke="#00c010" stroke-width="3.500"/><path d="M464 513l5 12h-10z" fill="#10d820"/>
        <path d="M465 539l-10 4" stroke="#0000b0" stroke-width="3"/><path d="M448 546l7-6 3 7z" fill="#1010d0" stroke="#0000a0"/>
        <path d="M466 539l12 3" stroke="#b00000" stroke-width="3"/><path d="M486 544l-9-5-2 7z" fill="#d82020" stroke="#a00000"/>
        <text class="ax" x="459" y="506">Y</text><text class="ax" x="489" y="549">X</text><text class="ax" x="436" y="553">Z</text>
      </svg>
    </div>
    <div class="prompt">
      <span class="pb"><svg viewBox="0 0 16 16"><path d="M1 8l6-5v3.500h8v3H7V13z"/></svg></span><span class="pb"><svg viewBox="0 0 16 16"><path d="M3 2l10 12M13 2L3 14" stroke="#f01010" stroke-width="1.700"/></svg></span>
      <span class="msg">Fill out the Edit Section Assignment dialog</span>
      <svg class="ds" viewBox="0 0 22 24" fill="none" stroke="#4c5660" stroke-width="1.300"><path d="M6 3q7-2 8 0t-7 6q6-1 4 4T1 21q2-3 6-9M21 9q-6-1-6 2t2 4-6 4"/></svg><span class="sim">SIMULIA</span>
    </div>
  </section>
</main>

<footer class="console">
  <div class="ctabs"><span class="t1"><svg viewBox="0 0 22 22"><path d="M3.500 1.500h17v18h-17z" fill="#e8e8d8" stroke="#333"/><path d="M2 21l8-7" stroke="#3c3010" stroke-width="5"/><path d="M2.500 20.500l7-6" stroke="#e8c040" stroke-width="2.500"/></svg></span><span class="t2"><svg viewBox="0 0 24 24"><rect x="1" y="1" width="22" height="22" fill="#f4d868" stroke="#111" stroke-width="2"/><path d="M5 8l3.500 3.500L5 15M10.500 8l3.500 3.500-3.500 3.500M16 8l3.500 3.500L16 15" fill="none" stroke="#000" stroke-width="1.500"/></svg></span></div>
  <pre>A new model database has been created.
The model "Model-1" has been created.</pre>
  <svg class="rs" viewBox="0 0 12 12"><path d="M10 1v10M6 5v6M2 9v2" stroke="#b0b0b0" stroke-width="2" stroke-dasharray="2 2"/></svg>
</footer>

<div class="dialog">
  <div class="title"><svg viewBox="0 0 16 16"><path d="M5 1h6v2h2v10h-2v2H5v-2H3V3h2z" fill="#6f6fb4"/><path d="M0 8h16M2 6v4M14 6v4" stroke="#54549a"/><path d="M2 8h12" stroke="#fff" stroke-width="1.500"/></svg><span>Edit Section Assignment</span><b class="close"><svg viewBox="0 0 12 10"><path d="M2 1l8 8M10 1L2 9" stroke="#5a2020" stroke-width="4"/><path d="M2 1l8 8M10 1L2 9" stroke="#fff" stroke-width="2.400"/></svg></b></div>
  <div class="body">
    <fieldset class="f1"><legend>Region</legend><div class="r"><span class="k1">Region:</span><span>Set-3</span></div></fieldset>
    <fieldset class="f2"><legend>Section</legend>
      <div class="r sr"><span>Section:</span><div class="combo sc"><span>Seção Banzo Inferior</span><b><svg><use href="#dn"/></svg></b></div><svg class="ti bm"><use href="#ibeam"/></svg></div>
      <div class="r note"><strong>Note:</strong><span>List contains only sections<br>applicable to the selected regions.</span></div>
      <div class="r tp"><span class="k2">Type:</span><span>Truss</span></div>
      <div class="r mt"><span class="k2">Material:</span><span>Aluminio</span></div>
    </fieldset>
    <div class="btns"><button class="ok">OK</button><button>Cancel</button></div>
  </div>
</div>
</body>
</html>
```
FILE: styles.css
```css
*{box-sizing:border-box}
html,body{margin:0;height:708px;overflow:hidden}
body{width:1366px;position:relative;display:flex;flex-direction:column;font:12px/16px "Open Sans","Noto Sans",sans-serif;letter-spacing:-.25px;color:#000;background:linear-gradient(90deg,#fdfdfd,#fcfcfc 30%,#efefef 95%);border-top:1px solid #3a4050;border-bottom:1px solid #222}
svg{display:block;flex:none}
.defs{position:absolute}
i,em,b{font-style:normal;font-weight:400}
.menubar{height:25px;border-bottom:1px solid #a8a8a8;display:flex;align-items:center;padding-left:5px}
.appicon{width:14px;height:14px}
.menus{display:grid;grid-template-columns:34px 50px 63px 41px 59px 55px 50px 74px 51px 53px 55px 45px 60px 40px 14px;margin-left:11px;align-items:center;white-space:nowrap;padding-top:3px}
.menus u{text-underline-offset:2px}
.whatis{width:14px;height:13px;margin-top:-3px}
.winbtns{margin-left:auto;display:flex;gap:5px;padding-right:5px;margin-top:-1px}
.winbtns b{width:15px;height:13px;border:1px solid #96a4b4;background:linear-gradient(#f4f8fd,#d8e4f2)}
.winbtns svg{width:13px;height:11px}
.toolrow{height:28px;display:flex}
.group{display:flex;align-items:center;height:28px;padding-top:1px;border-bottom:1px solid #a4a4a4;border-right:1px solid #a4a4a4;background:linear-gradient(#fdfdfd,#eee)}
.g2{margin-left:219px;border-right:0}.g3{margin-left:15px}.g4{margin-left:26px}.g5{margin-left:657px}
.ic{width:26px;height:24px}
.w24{width:24px}
.cur{width:27px}
.grip{width:8px;height:14px;flex:none;background:repeating-linear-gradient(#9a9a9a 0 2px,transparent 2px 4px) 3px 0/2px 14px no-repeat}
.sep{width:1px;height:26px;background:#a4a4a4;flex:none}
.caret{width:13px;height:5px}
.combo{display:flex;align-items:center;background:#fff;border:1px solid #8c8c8c;border-width:2px 1px 1px 2px;border-color:#7a7a7a #a8a8a8 #a8a8a8 #7a7a7a;height:24px;padding:1px;white-space:nowrap;flex:none}
.combo span{flex:1;padding-left:2px}
.combo b{width:12px;height:100%;border:1px solid #777;background:linear-gradient(90deg,#fafafa,#dcdcdc);display:flex;align-items:center;justify-content:center;flex:none}
.combo b svg{width:7px;height:4px}
.w121{width:121px;border-width:1px}
.all{width:106px;height:25px;background:#b0cdec;border:1px solid #9ab;margin-left:-1px}
.all b{background:#e4e8ee;border-color:#aaa;width:11px}
.all b svg{fill:#999}
.work{display:flex;height:537px}
.side{width:325px;padding-left:2px;padding-top:6px}
.tabs{display:flex;align-items:flex-end;height:23px}
.tabs span{height:21px;border:1px solid #8a8c94;border-bottom:0;border-left:0;background:linear-gradient(#f2f2f2,#d4d4d4);padding:2px 6px 0 7px;line-height:17px;white-space:nowrap;width:53px}
.tabs span:last-child{width:97px}
.tabs .on{height:24px;width:53px;background:#fff;border-left:1px solid #8a8c94;padding:4px 0 0 8px;margin-bottom:-1px;z-index:1}
.panel{width:317px;height:503px;border:1px solid #8a8c94;border-bottom:0;background:#fff;padding:6px 0 0 2px}
.dbrow{display:flex;align-items:center;height:24px}
.db{width:217px;height:23px;border:1px solid #999}
.dbi{width:17px;height:16px;margin-left:1px}
.db span{padding-left:4px}
.d1{width:12px;height:18px;margin-left:6px}.d2{width:16px;height:14px;margin-left:9px}.d3{width:16px;height:16px;margin-left:10px}.d4{width:16px;height:16px;margin-left:10px}
.treebox{display:flex;justify-content:space-between;height:469px;width:314px;border:1px solid #8a8c94;margin-top:4px;overflow:hidden;background:#fff}
.tree,.tree ul{list-style:none;margin:0;padding:0}
.root{margin-left:-2px;width:298px;flex:none}
.tree li>ul{margin-left:17px}
.tree li.more>ul{margin-left:8px;padding-left:8px;border-left:1px dotted #909090}
.tree p{margin:0;height:19px;display:flex;align-items:center;white-space:nowrap}
.bx{width:17px;height:19px}
.ti{width:16px;height:16px;margin-right:5px}
.noicon{margin-left:1px;border-bottom:2px solid #000;line-height:14px;margin-top:2px}
.sel{background:#3399ff;color:#fff;height:19px;line-height:18px;margin-left:-2px;padding:0 3px 0 2px}
.scroll{width:17px;background:#f0f0f0;display:flex;flex-direction:column;align-items:center;padding-top:7px}
.scroll svg{width:8px;height:5px;fill:#444}
.scroll i{width:15px;height:234px;margin-top:6px;border:1px solid #979797;border-radius:2px;background:repeating-linear-gradient(#666 0 1px,transparent 1px 3px) center/7px 9px no-repeat,linear-gradient(90deg,#f6f6f6,#d2d2d2)}
.scroll .bot{margin-top:auto;margin-bottom:6px}
.stage{width:1041px}
.context{height:33px;display:flex;align-items:center;background:linear-gradient(#fff,#ececec);border-bottom:1px solid #666;padding-left:8px}
.context label{flex:none}
.l1{width:49px}.l2{width:41px;margin-left:13px}.l3{width:28px;margin-left:13px}
.c1{width:107px}.c2{width:137px}.c3{width:88px}
.spin{width:9px;height:18px;border:1px solid #aaa;background:linear-gradient(#f4f4f4,#f4f4f4 7px,#aaa 7px,#aaa 8px,#f4f4f4 8px);position:relative;flex:none}
.spin:before,.spin:after{content:"";position:absolute;left:1px;border:2.5px solid transparent}
.spin:before{border-bottom-color:#999;top:0}.spin:after{border-top-color:#999;bottom:-1px}
.act:before{border-bottom-color:#4a60a8}.act:after{border-top-color:#4a60a8}
.canvasrow{display:flex;height:467px}
.toolbox{width:62px;height:467px;overflow:hidden;background:linear-gradient(90deg,#fdfdfd,#efefef);display:grid;grid-template-columns:27px 27px;grid-template-rows:33px 32px 27px 30px 29px 33px 33px 32px 1px 34px 28px 1px 32px 30px 1px 32px 30px 1px 36px;padding-left:3px;justify-items:center;align-items:center}
.toolbox hr{grid-column:1/3;width:58px;height:1px;border:0;margin:0 0 0 3px;background:#a0a0a0}
.tb{width:24px;height:24px}
.low{margin-top:8px}
.dnp{margin-top:3px}
.up{margin-top:-3px}
.pressed{width:27px;height:25px;border:2px solid #777;border-radius:4px;background:#e4e4e4;display:flex;justify-content:center}
.pressed svg{width:24px;height:21px}
.n2{font:bold 9px "Liberation Sans",sans-serif}
.view{width:979px;height:467px;border-right:1px solid #ddd}
.rp{font:10.5px "DejaVu Sans Mono",monospace;letter-spacing:0;fill:#ff0}
.tri{font:bold 8px "Liberation Mono",monospace;fill:#ff0}
.ax{font:bold 11px "Liberation Mono",monospace;fill:#fff}
.prompt{height:32px;display:flex;align-items:center;padding-left:6px;background:linear-gradient(#fdfdfd,#efefef)}
.pb{width:19px;height:22px;border:1px solid #777;border-radius:3px;background:linear-gradient(#f6f6f6,#d8d8d8);display:flex;align-items:center;justify-content:center;margin-right:3px}
.pb svg{width:15px;height:16px}
.msg{margin-left:4px;padding-top:2px}
.ds{width:22px;height:24px;margin-left:auto}
.sim{width:84px;font:italic 13px "DejaVu Sans",sans-serif;letter-spacing:3.1px;color:#2f3840;padding:6px 0 0 2px;white-space:nowrap}
.console{height:89px;margin-top:4px;display:flex;position:relative}
.ctabs{width:39px;padding-left:2px;display:flex;flex-direction:column}
.t1{height:39px;width:37px;border:1px solid #8a8c94;border-right:0;background:#fff;display:flex;align-items:center;justify-content:center}
.t1 svg{width:22px;height:22px}
.t2{height:35px;width:35px;margin-left:2px;border:1px solid #8a8c94;border-top:0;border-right:0;background:linear-gradient(90deg,#f0f0f0,#d0d0d4);display:flex;align-items:center;justify-content:center}
.t2 svg{width:24px;height:24px}
.console pre{margin:0;width:1309px;height:85px;border:1px solid #8a8c94;border-width:2px 1px 1px 3px;border-left-style:double;background:#fff;font:13.33px/13px "Liberation Mono",monospace;letter-spacing:-.04px;padding:3px 0 0 4px}
.rs{width:12px;height:12px;margin:auto 1px 3px auto}
.dialog{position:absolute;left:371px;top:127px;width:256px;height:274px;border:1px solid #1c2430;border-radius:7px;box-shadow:0 0 0 1px rgba(255,255,255,.25) inset,2px 3px 12px 3px rgba(0,0,0,.75);background:linear-gradient(90deg,#cdd4dc,#98a2b0 40px,#6b788c 120px,#45546c);padding:0 5px 5px}
.title{height:27px;display:flex;align-items:center}
.title>svg{width:16px;height:16px;margin-left:1px}
.title span{margin-left:5px;margin-top:-1px;text-shadow:0 0 6px #fff,0 0 8px #fff,0 0 10px #fff}
.close{margin-left:auto;margin-right:0;width:48px;height:19px;align-self:flex-start;border:1px solid #4c1414;border-top:0;border-radius:0 0 5px 5px;background:linear-gradient(#e0a098,#c04838 45%,#a82010 50%,#d06848);display:flex;align-items:center;justify-content:center;box-shadow:inset 0 0 0 1px rgba(255,255,255,.4)}
.close svg{width:12px;height:10px}
.body{height:240px;border:1px solid #2c3850;background:linear-gradient(90deg,#fefefe,#f0f0f0);padding:6px 5px 0 4px;display:flex;flex-direction:column}
fieldset{margin:0;border:1px solid #d0d8e0;border-radius:3px;padding:0 0 0 7px;min-width:0}
legend{padding:0 4px;margin-left:0}
.f1{height:47px}
.f2{height:137px;margin-top:7px}
.f1 .r{margin-top:7px}
.r{display:flex;white-space:nowrap}
.k1{width:48px}.k2{width:54px}
.sr{align-items:center;height:24px;margin-top:6px}
.sr>span{width:46px}
.sc{width:139px}
.sc.combo{border-width:1px}
.bm{margin-left:17px;margin-top:-7px}
.note{line-height:15px;margin-top:6px;letter-spacing:-.28px}
.note strong{width:39px}
.tp{margin-top:8px}.mt{margin-top:7px}
.btns{display:flex;justify-content:space-between;padding:14px 30px 0}
.btns button{width:54px;height:21px;border:1px solid #777;border-radius:3px;background:linear-gradient(#f4f4f4,#ebebeb 50%,#d8d8d8 50%,#cfcfcf);font:inherit;letter-spacing:inherit;padding:0}
.btns .ok{border-color:#3c7fb1;background:linear-gradient(#eaf6fd,#d9f0fc 50%,#bee6fd 50%,#a7d9f5)}
```
